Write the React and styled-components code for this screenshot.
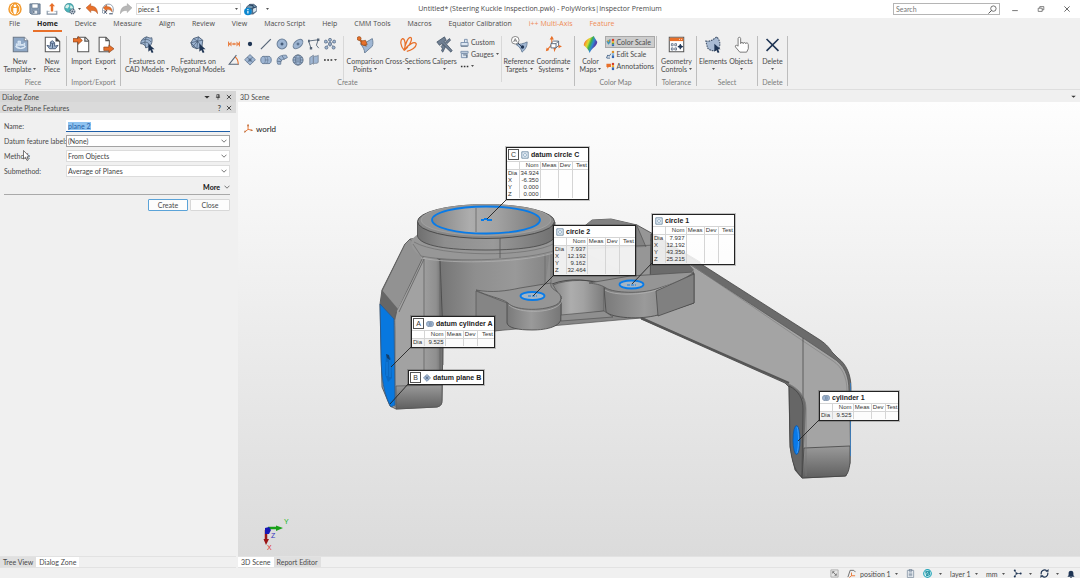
import React, { useEffect, useRef } from "react";
import styled, { createGlobalStyle } from "styled-components";

const navy = "#1f3554";
const blue = "#9fb6d3";
const orange = "#e8702a";

const GlobalStyle = createGlobalStyle`
  * {
    box-sizing: border-box;
  }

  body {
    margin: 0;
    background: #f0f0f0;
    color: #4a4a4a;
    font-family: Lato, "Open Sans", sans-serif;
    font-size: 7px;
    line-height: 8px;
  }

  button,
  input,
  select {
    margin: 0;
    padding: 0;
    border: none;
    border-radius: 0;
    background: none;
    color: inherit;
    font: inherit;
    outline: none;
  }

  select {
    appearance: none;
  }

  svg {
    display: block;
    flex: none;
  }
`;

/* ---------- icons ---------- */

const Icon = ({ size = 12, box = 20, children }) => (
  <svg width={size} height={size} viewBox={`0 0 ${box} ${box}`} fill="none" aria-hidden="true">
    {children}
  </svg>
);

const Caret = () => (
  <svg width="3" height="2" viewBox="0 0 3 2" aria-hidden="true">
    <path d="M0 0h3L1.500 2z" fill="#555" />
  </svg>
);

const Chevron = () => (
  <svg width="6" height="4" viewBox="0 0 6 4" fill="none" aria-hidden="true">
    <path d="M0.5 0.7L3 3.2L5.5 0.7" stroke="#555" strokeWidth="0.8" />
  </svg>
);

const Pointer = () => (
  <path d="M11 9l0 9.5l2.3-2l1.7 3.5l2-1l-1.7-3.4h3z" fill={navy} />
);

const icons = {
  logo: (
    <>
      <circle cx="10" cy="10" r="9.6" fill="#f39a2d" />
      <path d="M7 3C2 6 2 14 7 17M13 3c5 3 5 11 0 14" stroke="#fff" strokeWidth="1.3" />
      <circle cx="10" cy="5.500" r="2" fill="#fff" />
      <path d="M7.500 8.500h5v5l-1 4h-3l-1-4z" fill="#fff" />
    </>
  ),
  save: (
    <>
      <path d="M1.5 1.5h17v17H3.5l-2-2z" fill="#8ca0b8" stroke="#54687f" strokeWidth="1.3" />
      <path d="M5 1.5h10v7H5z" fill="#fff" stroke="#54687f" />
      <path d="M5.5 12h9v6.5h-9z" fill="#e6ebf1" stroke="#54687f" />
      <path d="M7 13v4h2v-4z" fill="#54687f" />
    </>
  ),
  publish: (
    <>
      <path d="M2 13v5.5h16V13" stroke="#8493a4" strokeWidth="1.8" />
      <path d="M3 14h3M14 14h3" stroke="#8493a4" />
      <path d="M10 0l5 5.5h-3V14H8V5.500H5z" fill={orange} />
    </>
  ),
  globe: (
    <>
      <circle cx="8.500" cy="8" r="7.5" fill="#4ab5ba" stroke="#357e8a" />
      <path d="M3 4l4-2l2 3l-3 4l-4-1zM11 3l4 4l-2 4l-3-3z" fill="#d7efe9" />
      <circle cx="14" cy="14" r="4" fill="#c8d1dc" stroke="#536577" strokeWidth="2" strokeDasharray="2 1" />
      <circle cx="14" cy="14" r="1.6" fill="#536577" />
    </>
  ),
  undo: (
    <path d="M0 8l8-7v4c7 0 11 4 11.500 13c-2.500-4-5-6-11.500-5.500V16z" fill={orange} stroke="#9e522a" strokeWidth="0.7" />
  ),
  undoHistory: (
    <>
      <path d="M1 17C-1 7 5 1 12 2s8 9 6 14" stroke="#8b99a9" strokeWidth="1.6" />
      <path d="M2 8l6-5v3c6 0 9 3 9 9c-2-3-4-4-9-4v3z" fill={orange} stroke="#8f4b2a" strokeWidth="0.6" />
      <path d="M3 12l5 6M8 12l-5 6" stroke={navy} strokeWidth="1.4" />
      <path d="M12 18h6" stroke={navy} strokeWidth="1.5" />
    </>
  ),
  redo: (
    <path d="M20 8l-8-7v4C5 5 1 9 0.500 18C3 14 5.500 12 12 12.500V16z" fill="#b8b8b8" stroke="#999" strokeWidth="0.7" />
  ),
  pieceInfo: (
    <>
      <path d="M4 6l5-4h6l4 3v8l-5 4H8l-4-3z" fill="#6d93ad" stroke={navy} />
      <path d="M8 3l6 1v4l5-2M9 9h5v7" stroke={navy} strokeWidth="1.4" />
      <path d="M14 9l5-2v5l-5 3z" fill="#dce6ec" />
      <circle cx="6" cy="13" r="5.800" fill="#0b86cf" />
      <path d="M6 12v4M6 9.300v1.400" stroke="#fff" strokeWidth="1.8" />
    </>
  ),
  template: (
    <>
      <path d="M1.5 1.5h13l4 4v13h-17z" fill="#8fa8c6" stroke="#6b7889" strokeWidth="1.2" />
      <path d="M14.500 1.500v4h4" fill="#fff" stroke="#6b7889" />
      <path d="M4 12.500c2 3 10 3 12 0l-2-1.500h-8zM7 6h3v4h3l2-2v5l-5 1.500L5 12V9l2 1z" fill="#c9dbef" stroke="#e8f1fb" strokeWidth="0.8" />
    </>
  ),
  piece: (
    <>
      <path d="M1.5 1.5h12l5 5v12h-17z" fill="#fff" stroke="#555" strokeWidth="1.2" />
      <path d="M13.500 1.500v5h5z" fill="#444" />
      <path d="M3.500 11l3 4h7l3-4l-4 1V8L10 5.500L7.500 7v5z" fill="#9fb5d0" stroke="#3d5270" />
      <path d="M8 8l2 1l2-1M10 9v5" stroke="#3d5270" />
    </>
  ),
  import: (
    <>
      <path d="M5.5 1.5h9l4 4v13h-13z" fill="#fff" stroke="#555" strokeWidth="1.2" />
      <path d="M14 1.500v4.500h4.500" stroke="#555" strokeWidth="1.5" />
      <path d="M0 3h6V0.500l5 4.700l-5 4.600V7H0z" fill={orange} stroke="#8e451c" strokeWidth="0.8" />
    </>
  ),
  export: (
    <>
      <path d="M2.500 1.500h8l4 4v13h-12z" fill="#fff" stroke="#555" strokeWidth="1.2" />
      <path d="M10.500 1.500v4h4" stroke="#555" strokeWidth="1.500" />
      <path d="M8 13h6v-2.500l6 4.500l-6 4.500V17H8z" fill={orange} stroke="#8e451c" strokeWidth="0.8" />
    </>
  ),
  cadFeatures: (
    <>
      <path d="M2 9C2 5 5 2 9 1c2 1 5 2 6 1c1 4 0 7-2 10l-5 2c0-3-3-5-6-5z" fill={blue} stroke="#52657c" strokeWidth="1.1" />
      <path d="M2 9c5-3 10-2 11 3M9 1C6 5 7 10 8 14M4 5c4-2 8-1 10 2" stroke="#52657c" />
      <Pointer />
    </>
  ),
  polyFeatures: (
    <>
      <path d="M1 8l3-5l6-2l5 4l-1 8l-6 2l-5-2z" fill={blue} stroke="#52657c" strokeWidth="1.1" />
      <path d="M1 8l8-2l6-1M4 3l5 3l1-5M9 6l-1 9M9 6l5 7M9 6l-6 7M1 8l7 7" stroke="#40536b" strokeWidth="0.8" />
      <Pointer />
    </>
  ),
  distance: <path d="M1 6v8M19 6v8M2 10h16M6 7l-4 3l4 3M14 7l4 3l-4 3M10 8v4" stroke={orange} strokeWidth="1.6" />,
  point: <circle cx="10" cy="10" r="3.600" fill={navy} />,
  line: <path d="M1.500 18.500L18 2" stroke="#566577" strokeWidth="2" />,
  circle: (
    <>
      <circle cx="10" cy="10" r="8.200" fill={blue} stroke="#6c819b" strokeWidth="1.7" />
      <path d="M10 7.500v5M7.500 10h5" stroke={navy} strokeWidth="1.500" />
    </>
  ),
  ellipse: (
    <>
      <ellipse cx="10" cy="10" rx="9.500" ry="5.800" transform="rotate(-42 10 10)" fill={blue} stroke="#6c819b" strokeWidth="1.7" />
      <path d="M10 7.500v5M7.500 10h5" stroke={navy} />
    </>
  ),
  polyline: (
    <>
      <path d="M5 17L1 5L17 3L14 12L18 17" stroke="#566577" strokeWidth="1.5" />
      <path d="M3 15h4v4H3zM0 3h3v4H0zM15 1h4v4h-4z" fill="#566577" />
    </>
  ),
  pattern: (
    <>
      <path d="M10 5v10M4 6l12 8M16 6L4 14" stroke="#7186a1" strokeWidth="1.2" />
      {[[10, 3], [3, 6], [17, 6], [10, 10], [4, 16], [16, 16]].map(([x, y]) => (
        <circle key={`${x}-${y}`} cx={x} cy={y} r="2.500" fill={blue} stroke="#52657c" strokeWidth="1.2" />
      ))}
    </>
  ),
  angle: (
    <>
      <path d="M14 2L2 17h16" stroke="#566577" strokeWidth="1.8" />
      <path d="M12 5c4 3 5 7 5 12" stroke={orange} strokeWidth="1.7" />
    </>
  ),
  plane: (
    <>
      <path d="M10 1l9 8.500l-9 9l-9-9z" fill={blue} stroke="#6c819b" strokeWidth="1.5" />
      <path d="M5.500 5l9 9M14.500 5l-9 9M10 7v6M7 10h6" stroke="#455a75" strokeWidth="1.1" />
    </>
  ),
  cylinder: (
    <>
      <path d="M5 4h10c5 0 5 12 0 12H5C0 16 0 4 5 4z" fill={blue} stroke="#6c819b" strokeWidth="1.6" />
      <path d="M6 4c4 0 4 12 0 12M10 4c4 0 4 12 0 12M8 10h6" stroke="#6c819b" strokeWidth="1.3" />
    </>
  ),
  cone: (
    <>
      <path d="M3 17C-1 8 5 1 17 2l2 4l-6 3c-4 0-6 3-5 8z" fill={blue} stroke="#6c819b" strokeWidth="1.500" />
      <path d="M4 6l6 5M10 3l4 6M2 12l7 1" stroke="#52657c" strokeWidth="1.2" />
    </>
  ),
  sphere: (
    <>
      <circle cx="10" cy="10" r="8.500" fill={blue} stroke="#52657c" strokeWidth="1.3" />
      <ellipse cx="10" cy="10" rx="4" ry="8.500" stroke="#52657c" />
      <path d="M1.500 10h17M3 5.500c4 2 10 2 14 0M3 14.500c4-2 10-2 14 0" stroke="#52657c" />
    </>
  ),
  surface: (
    <path d="M3 6l6-4v13l-6 3zM9 5c3-3 6 0 8-3v12c-3 3-5 0-8 3z" fill={blue} stroke="#7e8c9e" strokeWidth="1.500" />
  ),
  more: (
    <path d="M2 10h3.500M8.500 10H12M15 10h3.500" stroke="#333" strokeWidth="3" />
  ),
  comparison: (
    <>
      <path d="M4 9c5 0 9-3 14-6c1 4 1 6 0 9l-9 8c0-4-2-7-5-11z" fill={blue} stroke="#667b94" />
      <path d="M2 3l6 4l3 5l-5-2z" fill={orange} stroke="#884516" strokeWidth="0.700" />
      <circle cx="2.500" cy="3" r="2.300" fill={orange} stroke="#884516" strokeWidth="0.7" />
      <path d="M5 6l5-1l2 5l-4 1l-3-1z" fill={orange} stroke="#884516" strokeWidth="0.7" />
    </>
  ),
  sections: (
    <path d="M5 17C0 11 0 5 3 3c3 0 4 7 2 14C6 9 10 0 13 2c2 3-3 11-8 15c4-7 12-11 14-8c1 4-6 8-11 9" stroke={orange} strokeWidth="1.500" />
  ),
  calipers: (
    <>
      <path d="M1 7l9-6l2 4l-2.500 1.500L19 17l-1.500 2L7 9l-3 2z" fill="#6f7f92" stroke="#38485c" strokeWidth="0.8" />
      <path d="M8 10l3 3l-3 6l-1.500-1.500l1-3l-1.500-2zM11 7l5-4l1 2l-4 4z" fill="#6f7f92" stroke="#38485c" strokeWidth="0.8" />
    </>
  ),
  custom: (
    <>
      <path d="M2 10h16v8H2zM10 10V3h6v7" fill="#dce6f1" stroke="#7990ac" strokeWidth="2" />
      <path d="M2 18h15" stroke="#53667c" strokeWidth="2" />
    </>
  ),
  gauges: (
    <>
      <path d="M2 3h16v4H2zM3 8h13v9H3z" fill="#dce6f1" stroke="#7990ac" strokeWidth="2" />
      <path d="M7 11h8v6" stroke="#53667c" strokeWidth="2" />
    </>
  ),
  targets: (
    <>
      <path d="M6 10c4 0 9-1 13-3c0 4-1 8-6 12c-1-4-3-6-7-9z" fill={blue} stroke="#667b94" />
      <circle cx="5" cy="5" r="4.500" fill="#fff" stroke="#555" strokeWidth="0.800" />
      <path d="M3 7l2-4l2 4M3.700 5.700h2.600" stroke="#555" strokeWidth="0.800" />
      <path d="M8 8l5 5" stroke={navy} />
      <circle cx="13.500" cy="13" r="2" fill={navy} />
    </>
  ),
  coordinate: (
    <>
      <path d="M8 1v9l9 2M8 10l-6 7" stroke={orange} strokeWidth="1.3" />
      <path d="M8 0l2.500 4h-5zM20 12l-4 2.500v-4zM1 18l1-4.500l3 3zM11 19l-1-5h3z" fill={orange} />
      <path d="M7 9l3-3h6v5l-3 3H7zM7 9h6v5M13 9l3-3" fill="#fff" stroke="#4b5b6e" />
    </>
  ),
  elements: (
    <>
      <path d="M1 6c5 1 9-2 13-5c3 4 5 8 2 14c-4 4-11 2-13-1z" fill="#a9bbd3" stroke="#485970" strokeWidth="1.3" strokeDasharray="2 1" />
      <Pointer />
    </>
  ),
  objects: (
    <path d="M6 12V3c0-2 3-2 3 0v6c0-2 3-2 3 0c0-2 3-1.500 3 0c0-1.500 3-1 3 1v5l-2 4H8l-5-6c-1-2 1-3 3-1z" fill="#fff" stroke="#666" />
  ),
  delete: <path d="M3 3.500l14 14M17 3.500l-14 14" stroke={navy} strokeWidth="1.900" />,
  geometry: (
    <>
      <path d="M1.500 1.500h17v17h-17z" fill="#fff" stroke="#555" strokeWidth="1.2" />
      <path d="M2 2h16v4H2z" fill={orange} />
      <path d="M13 4h1M15.500 4h1" stroke="#fff" />
      <path d="M4 9h2v2.500H4zM4 14h2v2.500H4zM8 9h2v2.500H8zM8 14h2v2.500H8z" stroke="#5b6d84" />
      <path d="M14.500 9.500v6M11.500 12.500h6" stroke={navy} strokeWidth="1.300" />
      <circle cx="14.500" cy="12.500" r="1.700" stroke={navy} />
    </>
  ),
  colorMap: (
    <>
      <defs>
        <linearGradient id="rainbow" x1="0" y1="0" x2="1" y2="0.5">
          <stop offset="0.1" stopColor="#e52f2b" />
          <stop offset="0.28" stopColor="#f3a72c" />
          <stop offset="0.42" stopColor="#d8dd33" />
          <stop offset="0.56" stopColor="#3fb04b" />
          <stop offset="0.72" stopColor="#2f86d0" />
          <stop offset="0.88" stopColor="#5140a8" />
        </linearGradient>
      </defs>
      <path d="M2 11C3 4 8 3 14 0c1 3 3 5 4 7c-1 6-6 6-9 13c-1-4-4-6-7-9z" fill="url(#rainbow)" />
    </>
  ),
  colorScale: (
    <>
      <path d="M1 7c3-1 5-4 9-5v8l-5 5z" fill="#4596b8" />
      <path d="M2 6l6-2l-2 5z" fill="#e2a52d" />
      <path d="M13 2h5v5h-5z" fill="#d33f2e" />
      <path d="M13 7h5v4h-5z" fill="#f0ad2e" />
      <path d="M13 11h5v3h-5z" fill="#54a846" />
      <path d="M13 14h5v4h-5z" fill="#3467b7" />
    </>
  ),
  editScale: (
    <>
      <path d="M13 2h5v5h-5z" fill="#d9902e" />
      <path d="M13 7h5v5h-5z" fill="#8bb9dd" />
      <path d="M13 12h5v6h-5z" fill="#3467b7" />
      <path d="M1 18l3-7l3 3l4-6M2 18h7" stroke="#43638a" strokeWidth="2" />
    </>
  ),
  annotations: (
    <>
      <path d="M1 4h10v7H6l-3 4v-4H1z" fill={orange} />
      <path d="M13 2h5v5h-5z" fill="#d33f2e" />
      <path d="M13 7h5v5h-5z" fill="#f0ad2e" />
      <path d="M13 12h5v6h-5z" fill="#3467b7" />
    </>
  ),
  search: (
    <>
      <circle cx="12" cy="8" r="6" stroke="#555" strokeWidth="1.8" />
      <path d="M8 12l-7 7" stroke="#555" strokeWidth="2.200" />
    </>
  ),
  minimize: <path d="M3 14h14" stroke="#555" strokeWidth="2" />,
  restore: <path d="M3 8h10v8H3zM7 8V4h10v8h-4" stroke="#555" strokeWidth="1.800" />,
  windowClose: <path d="M3.500 3.500l13 13M16.500 3.500l-13 13" stroke="#444" strokeWidth="2" />,
  close: <path d="M3 3l14 14M17 3L3 17" stroke="#333" strokeWidth="2.800" />,
  pin: <path d="M6 2h8v9H6zM3 11h14M10 11v8M12 2v9" stroke="#333" strokeWidth="2.200" />,
  down: <path d="M1 7h18l-9 8z" fill="#333" />,
  world: (
    <>
      <path d="M9 1v11l10 2M9 12l-8 6" stroke={orange} strokeWidth="2" />
      <path d="M9 0l2.500 5h-5zM20 14l-5 2v-4zM0 19l2-5l3 4z" fill="#b97042" />
    </>
  ),
  resize: (
    <>
      <path d="M2 2h16v16H2z" fill="#e6e6e6" stroke="#aaa" strokeWidth="2" />
      <path d="M6 6l8 8M10 6H6v4M14 10v4h-4" stroke="#777" strokeWidth="2" />
    </>
  ),
  device: (
    <>
      <path d="M2 18L7 3h8l4 4" stroke="#555" strokeWidth="1.800" />
      <path d="M10 8v7h8M10 15l-5 4" stroke={orange} strokeWidth="2" />
    </>
  ),
  clipboard: (
    <>
      <path d="M3 3h14v16H3z" fill="#eef2f6" stroke="#8493a4" strokeWidth="1.800" />
      <path d="M7 1h6v4H7zM6 9h8M6 12h8M6 15h8" stroke="#66788d" strokeWidth="1.5" />
    </>
  ),
  tealGlobe: (
    <>
      <circle cx="10" cy="10" r="8.500" fill="#dff6f8" stroke="#25a6b9" strokeWidth="2.500" />
      <path d="M6 6l8-1l1 8l-7 2zM6 6l5 4l4 3M11 10l3-5M11 10l-3 5" stroke="#158b9d" strokeWidth="2" />
    </>
  ),
  nodes: (
    <>
      <path d="M4 4l4 6l-4 6M8 10h9" stroke={navy} strokeWidth="1.5" />
      <circle cx="4" cy="3.500" r="2.300" fill={navy} />
      <circle cx="8" cy="10" r="2.300" fill={navy} />
      <circle cx="4" cy="16.500" r="2.300" fill={navy} />
      <circle cx="17" cy="10" r="2.300" fill={navy} />
    </>
  ),
  refresh: (
    <>
      <path d="M3 12A7.500 7.500 0 0 1 15 4M17 8A7.500 7.500 0 0 1 5 16" stroke={navy} strokeWidth="2.600" />
      <path d="M12 6h7V0zM8 14H1v6z" fill={navy} />
    </>
  ),
  bell: <path d="M1 17l3-4V8c0-8 12-8 12 0v5l3 4zM8 18h4v2H8z" fill={navy} />,
  circleMark: (
    <>
      <path d="M2 2h16v16H2z" fill="#e9f1f8" stroke="#6d8ba3" strokeWidth="2.200" />
      <circle cx="10" cy="10" r="4" stroke="#8ca8bf" strokeWidth="1.800" />
    </>
  ),
};

/* ---------- title bar ---------- */

const TitleBar = styled.header`
  display: grid;
  grid-template-columns: 1fr auto 1fr;
  align-items: center;
  height: 18px;
  background: #fff;
`;

const QuickAccess = styled.div`
  display: flex;
  align-items: center;
  padding-left: 4px;
`;

const QuickButton = styled.button`
  display: flex;
  align-items: center;
  justify-content: center;
  gap: 2px;
  width: ${({ $w }) => $w || 16}px;
  height: 16px;
`;

const ComboBox = styled.label`
  position: relative;
  display: flex;
  align-items: center;
  width: ${({ $w }) => ($w ? `${$w}px` : "100%")};
  height: 12px;
  border: 1px solid ${({ $dark }) => ($dark ? "#a3a3a3" : "#dcdcdc")};
  background: #fff;

  select {
    width: 100%;
    height: 10px;
    padding: 0 12px 0 1px;
    color: #444;
  }

  svg {
    position: absolute;
    right: 2px;
    pointer-events: none;
  }
`;

const AppTitle = styled.h1`
  margin: 0;
  font-family: "Open Sans", sans-serif;
  font-size: 7px;
  font-weight: 400;
`;

const WindowTools = styled.div`
  display: flex;
  align-items: center;
  justify-content: flex-end;
  padding-right: 9px;
  gap: 18px;
`;

const SearchBox = styled.div`
  display: flex;
  align-items: center;
  width: 107px;
  height: 12px;
  padding: 0 2px;
  margin-right: -7px;
  border: 1px solid #b5b5b5;

  input {
    flex: 1;
    min-width: 0;
  }

  input::placeholder {
    color: #777;
  }
`;

/* ---------- ribbon ---------- */

const TabList = styled.nav`
  display: flex;
  gap: 9px;
  height: 16px;
  padding-left: 5px;
  font-family: "Open Sans", sans-serif;
`;

const RibbonTab = styled.button`
  height: 14px;
  padding: 0 4px;
  border-bottom: 2px solid ${({ $active }) => ($active ? orange : "transparent")};
  color: ${({ $active, $accent }) => ($active ? "#222" : $accent ? "#ef8c56" : "#4a4a4a")};
  font-weight: ${({ $active }) => ($active ? 700 : 400)};
  white-space: nowrap;
`;

const Ribbon = styled.div`
  display: flex;
  height: 56px;
  padding: 2px 0 3px;
  border-bottom: 1px solid #dedede;
`;

const Group = styled.section`
  display: flex;
  flex: none;
  flex-direction: column;
  justify-content: space-between;
  align-items: center;
  width: ${({ $w }) => $w}px;
  border-right: 1px solid #bdbdbd;

  h2 {
    margin: 0;
    color: #7b7b7b;
    font-size: 7px;
    font-weight: 400;
  }
`;

const GroupBody = styled.div`
  display: flex;
`;

const BigButton = styled.button`
  display: flex;
  flex-direction: column;
  align-items: center;
  width: ${({ $w }) => $w}px;
  height: 39px;
  white-space: nowrap;

  > svg {
    margin-bottom: 4px;
  }
`;

const LabelLine = styled.span`
  display: flex;
  align-items: center;
  justify-content: center;
  gap: 2px;
  height: 8px;
`;

const ToolGrid = styled.div`
  display: grid;
  grid-template-columns: repeat(7, 16px);
  grid-auto-rows: 16px;
  align-content: start;

  button {
    display: flex;
    align-items: center;
    justify-content: center;
    gap: 1px;
  }
`;

const InnerRule = styled.i`
  width: 1px;
  height: 46px;
  margin: 0 0 -7px ${({ $gap }) => $gap}px;
  background: #d8d8d8;
`;

const SmallStack = styled.div`
  display: flex;
  flex-direction: column;
  width: ${({ $w }) => $w}px;
`;

const SmallButton = styled.button`
  display: flex;
  align-items: center;
  gap: 2px;
  height: 12px;
  border: 1px solid ${({ $on }) => ($on ? "#a8a8a8" : "transparent")};
  background: ${({ $on }) => ($on ? "#cdcdcd" : "none")};
  white-space: nowrap;
`;

const Tool = ({ icon, w, lines, caret }) => (
  <BigButton $w={w}>
    <Icon size={17}>{icons[icon]}</Icon>
    <LabelLine>{lines[0]}</LabelLine>
    <LabelLine>
      {lines[1]}
      {caret && <Caret />}
    </LabelLine>
  </BigButton>
);

const ribbonTabs = [
  "File", "Home", "Device", "Measure", "Align", "Review", "View", "Macro Script",
  "Help", "CMM Tools", "Macros", "Equator Calibration", "i++ Multi-Axis", "Feature",
];

const featureTools = [
  "distance", "point", "line", "circle", "ellipse", "polyline", "pattern",
  "angle", "plane", "cylinder", "cone", "sphere", "surface", "more",
];

/* ---------- workspace ---------- */

const Page = styled.div`
  display: flex;
  flex-direction: column;
  height: 100vh;
  overflow: hidden;
`;

const Workspace = styled.main`
  display: grid;
  grid-template-columns: 236px 1fr;
  gap: 2px;
  flex: 1;
  min-height: 0;
  padding-top: 1px;
`;

const Pane = styled.section`
  display: flex;
  flex-direction: column;
  min-width: 0;
  min-height: 0;
`;

const PaneHeader = styled.div`
  display: flex;
  align-items: center;
  gap: 5px;
  flex: none;
  height: 11px;
  padding: 0 4px 0 2px;
  background: ${({ $shade }) => $shade || "#d6d6d6"};

  h2 {
    flex: 1;
    margin: 0;
    font-size: 7px;
    font-weight: 400;
  }
`;

const DialogForm = styled.form`
  flex: 1;
  padding: 7px 6px 0 4px;
`;

const Field = styled.div`
  display: grid;
  grid-template-columns: 62px 1fr;
  align-items: center;
  margin-bottom: 3px;
  white-space: nowrap;
`;

const NameInput = styled.input`
  width: 100%;
  height: 12px;
  padding: 0 2px;
  border-bottom: 1px solid #1f5fa8;
  background: #fff;

  &::selection {
    background: #8fc3f0;
    color: #1f5fa8;
  }
`;

const MoreRow = styled.div`
  display: flex;
  justify-content: flex-end;
  padding: 3px 0 3px;
  border-bottom: 1px solid #a9a9a9;
  margin-bottom: 4px;

  button {
    display: flex;
    align-items: center;
    gap: 4px;
    color: #222;
    font-weight: 900;
  }
`;

const Actions = styled.div`
  display: flex;
  justify-content: flex-end;
  gap: 2px;
`;

const ActionButton = styled.button`
  width: 40px;
  height: 12px;
  border: 1px solid ${({ $primary }) => ($primary ? "#5ba3d8" : "#d8d8d8")};
  border-radius: 1px;
  background: #fdfdfd;
`;

const BottomTabs = styled.div`
  display: flex;
  flex: none;
  height: 12px;
  border-top: 1px solid #e2e2e2;
  border-bottom: 1px solid #e2e2e2;
`;

const BottomTab = styled.button`
  padding: 0 3px;
  background: ${({ $active }) => ($active ? "#fff" : "#e0e0e0")};
  white-space: nowrap;
`;

const Canvas = styled.div`
  position: relative;
  flex: 1;
  min-height: 0;
  overflow: hidden;
  background: linear-gradient(#fefefe, #ececec 50%, #dbdbdb);
`;

const WorldTag = styled.div`
  position: absolute;
  left: 6px;
  top: 22px;
  display: flex;
  align-items: center;
  gap: 3px;
  color: #222;
  font-size: 8px;
`;

const MousePointer = styled.svg`
  position: absolute;
  left: 23px;
  top: 150px;
`;

/* ---------- feature annotations ---------- */

const Annotation = styled.article`
  position: absolute;
  left: ${({ $x }) => $x}px;
  top: ${({ $y }) => $y}px;
  width: ${({ $w }) => $w}px;
  padding-bottom: ${({ $bare }) => ($bare ? 0 : 1)}px;
  border: 1px solid #222;
  outline: 1px solid rgba(40, 40, 40, 0.25);
  background: rgba(255, 255, 255, 0.86);
  color: #333;
  font-family: "Liberation Sans", Arial, sans-serif;
  font-size: 6px;
  line-height: 7px;

  header {
    display: flex;
    align-items: center;
    gap: 2px;
    height: ${({ $datum }) => ($datum ? 13 : 11)}px;
    padding: 0 2px;
    background: #fff;
  }

  h3 {
    margin: 0;
    font-size: 7px;
    color: #222;
    white-space: nowrap;
  }

  table {
    width: 100%;
    border-collapse: collapse;
    table-layout: fixed;
  }

  th,
  td {
    padding: 0 1px;
    border-left: 1px solid #d5d5d5;
    font-weight: 400;
    text-align: right;
  }

  thead th {
    height: 8px;
    border-top: 1px solid #d5d5d5;
    border-bottom: 1px solid #d5d5d5;
    background: #fff;
  }

  th:first-child {
    border-left: none;
    text-align: left;
  }
`;

const DatumLetter = styled.b`
  flex: none;
  width: 11px;
  height: 11px;
  margin-left: -1px;
  border: 1px solid #555;
  font-size: 7px;
  font-weight: 400;
  line-height: 9px;
  text-align: center;
`;

const features = [
  { name: "datum circle C", datum: "C", mark: "circleMark", x: 268, y: 45, w: 83, rows: [["Dia", "34.924"], ["X", "-6.350"], ["Y", "0.000"], ["Z", "0.000"]] },
  { name: "circle 2", mark: "circleMark", x: 315, y: 123, w: 83, rows: [["Dia", "7.937"], ["X", "12.192"], ["Y", "9.162"], ["Z", "32.464"]] },
  { name: "circle 1", mark: "circleMark", x: 414, y: 112, w: 83, rows: [["Dia", "7.937"], ["X", "12.192"], ["Y", "43.350"], ["Z", "25.215"]] },
  { name: "datum cylinder A", datum: "A", mark: "cylinder", x: 173, y: 214, w: 84, rows: [["Dia", "9.525"]] },
  { name: "datum plane B", datum: "B", mark: "plane", x: 170, y: 268, w: 76, rows: [] },
  { name: "cylinder 1", mark: "cylinder", x: 581, y: 289, w: 80, rows: [["Dia", "9.525"]] },
];

const FeatureNote = ({ name, datum, mark, x, y, w, rows }) => (
  <Annotation $x={x} $y={y} $w={w} $datum={datum} $bare={!rows.length}>
    <header>
      {datum && <DatumLetter>{datum}</DatumLetter>}
      <Icon size={8}>{icons[mark]}</Icon>
      <h3>{name}</h3>
    </header>
    {rows.length > 0 && (
      <table>
        <colgroup>
          <col width="12" />
          <col width="21" />
          <col width="18" />
          <col width="14" />
          <col />
        </colgroup>
        <thead>
          <tr>
            <th aria-label="Dimension" />
            <th>Nom</th>
            <th>Meas</th>
            <th>Dev</th>
            <th>Test</th>
          </tr>
        </thead>
        <tbody>
          {rows.map(([label, nominal]) => (
            <tr key={label}>
              <th scope="row">{label}</th>
              <td>{nominal}</td>
              <td />
              <td />
              <td />
            </tr>
          ))}
        </tbody>
      </table>
    )}
  </Annotation>
);

/* The part is drawn in its own coordinates, with the view starting at 238, 102. */
const KnuckleModel = () => (
  <svg width="842" height="456" viewBox="238 102 842 456" fill="none" aria-hidden="true">
    <defs>
      <linearGradient id="ringWall" x1="0" x2="1">
        <stop offset="0" stopColor="#6f6f6f" />
        <stop offset="0.2" stopColor="#8e8e8e" />
        <stop offset="0.55" stopColor="#9a9a9a" />
        <stop offset="1" stopColor="#707070" />
      </linearGradient>
      <linearGradient id="bore" x1="0" x2="1">
        <stop offset="0" stopColor="#858585" />
        <stop offset="0.35" stopColor="#adadad" />
        <stop offset="0.6" stopColor="#a2a2a2" />
        <stop offset="1" stopColor="#7c7c7c" />
      </linearGradient>
      <linearGradient id="body" gradientUnits="userSpaceOnUse" x1="440" y1="0" x2="556" y2="0">
        <stop offset="0" stopColor="#757575" />
        <stop offset="0.3" stopColor="#8e8e8e" />
        <stop offset="0.65" stopColor="#999" />
        <stop offset="1" stopColor="#808080" />
      </linearGradient>
      <linearGradient id="lug" x1="0" x2="1">
        <stop offset="0" stopColor="#7a7a7a" />
        <stop offset="0.45" stopColor="#9a9a9a" />
        <stop offset="1" stopColor="#777" />
      </linearGradient>
      <linearGradient id="foot" x1="0" y1="0" x2="0" y2="1">
        <stop offset="0" stopColor="#9a9a9a" />
        <stop offset="1" stopColor="#5f5f5f" />
      </linearGradient>
      <linearGradient id="post" gradientUnits="userSpaceOnUse" x1="420" y1="0" x2="443" y2="0">
        <stop offset="0" stopColor="#a3a3a3" />
        <stop offset="0.7" stopColor="#8f8f8f" />
        <stop offset="1" stopColor="#6c6c6c" />
      </linearGradient>
    </defs>

    {/* rear hump and deck */}
    <path d="M545 250L586 225L592 220L611 219L637 225L655 235L700 262L690 300H545z" fill="#969696" stroke="#444" strokeWidth="0.8" />
    <path d="M586 225L592 220L611 219L637 225L646 247L553 251z" fill="#828282" />
    <path d="M553 250L655 245M637 226L646 247" stroke="#555" strokeWidth="0.7" />

    {/* right arm */}
    <path d="M651 234L687 255L817 338C825 343 829 347 832 352L838 358C846 364 851 374 851 388L850 463L846 476L802 478L795 470L790 447L789 387L785 383L641 319L650 290z" fill="#6b6b6b" stroke="#444" strokeWidth="0.8" />
    <path d="M640 316L694 270L687 262L803 338L833 358C843 364 849 374 849 391L850 448L804 449L806 408C806 396 798 389 789 384z" fill="#a4a4a4" />
    <path d="M650 240L691 265L803 338L833 358C844 365 849 375 849 391" stroke="#595959" strokeWidth="0.8" />
    <path d="M687 262L803 341L833 361C842 367 847 377 847 391" stroke="#7d7d7d" strokeWidth="0.6" />
    <path d="M641 318L789 383" stroke="#555" strokeWidth="2" />
    <path d="M803 338V399" stroke="#4b4b4b" strokeWidth="0.8" />
    <path d="M789 386C799 391 803 399 803 409L802 477C794 472 790 455 790 440z" fill="#666" stroke="#444" strokeWidth="0.8" />
    <path d="M804 448L850 446V463C849 470 848 474 845 476L802 478z" fill="url(#foot)" stroke="#444" strokeWidth="0.8" />
    <path d="M789 384C801 390 806 398 806 409V476" stroke="#777" strokeWidth="0.8" />
    <path d="M850.500 383V391M850.500 419V456" stroke="#347dc5" strokeWidth="0.8" />
    <ellipse cx="796.5" cy="440" rx="3.5" ry="14.500" fill="#0879e8" stroke="#1357a0" strokeWidth="0.8" />
    <path d="M797 427c2 5 2 20 0 26" stroke="#4aa6ff" strokeWidth="0.8" />

    {/* centre body */}
    <path d="M420 240H556V320L494 331H440L430 325z" fill="url(#body)" stroke="#555" strokeWidth="0.8" />
    <path d="M550 251L572 246L640 280L694 272L640 316L540 323z" fill="#8f8f8f" />
    <path d="M490 325L640 309L641 318L494 331z" fill="#868686" stroke="#555" strokeWidth="0.7" />
    <path d="M545 254V286M551 250V284" stroke="#666" strokeWidth="0.7" />

    {/* left arm */}
    <path d="M418 238L410 239L405 244L382 290L380 304L381 350L382 387L390 406L396 409L437 407C441 406 442 404 442 400L443 335L440 260L433 255L421 256z" fill="url(#post)" stroke="#444" strokeWidth="0.8" />
    <path d="M405 244L410 239L424 255L397 312L382 291z" fill="#929292" stroke="#555" strokeWidth="0.7" />
    <path d="M382 290L398 309L395 320L380 305z" fill="#666" />
    <path d="M397 311L425 257V386L396 390z" fill="#a2a2a2" />
    <path d="M396 312C394 317 395 322 395 333V407M399 312L424 259M424 259V386M440 258V374M443 335V365" stroke="#606060" strokeWidth="0.8" />
    <path d="M396 386L442 385V400C442 404 441 406 437 407L396 409z" fill="url(#foot)" stroke="#555" strokeWidth="0.7" />
    <path d="M380 304L394 319L395 405L391 407C384 395 381 378 381 350z" fill="#0878df" stroke="#28588b" strokeWidth="0.8" />
    <path d="M386 354L391 358L392 378L388 382L385 374z" fill="#0a68c2" />
    <path d="M386 354l3 1l1 5l-3-2z" fill="#123f6c" />
    <path d="M390 360v17M387 362v14" stroke="#1b90f5" strokeWidth="0.7" />

    {/* neck flare */}
    <path d="M418 234H555L556 251C540 260 460 263 421 256C415 253 409 246 412 239z" fill="#979797" />
    <path d="M421 256C455 263 530 260 556 250M414 242C440 257 530 258 555 243M421 256l-8-12" stroke="#6f6f6f" strokeWidth="0.7" />
    <path d="M421 258C455 265 530 262 556 252" stroke="#b0b0b0" strokeWidth="0.8" />

    {/* ring */}
    <path d="M417.5 222V236C420 246 448 250 486 250C524 250 552 246 555 236V222z" fill="url(#ringWall)" stroke="#444" strokeWidth="0.8" />
    <ellipse cx="486" cy="221.500" rx="68.500" ry="17" fill="#898989" stroke="#444" strokeWidth="0.9" />
    <ellipse cx="486" cy="220" rx="65" ry="15.500" fill="#949494" stroke="#a6a6a6" strokeWidth="0.7" />
    <ellipse cx="486" cy="220" rx="54" ry="13.500" fill="url(#bore)" stroke="#087be8" strokeWidth="1.800" />
    <path d="M476 208V232" stroke="#666" strokeWidth="0.8" />
    <path d="M500 238V258" stroke="#555" strokeWidth="0.8" />
    <path d="M481 220h3M484 219h4M487 220h5" stroke="#087be8" strokeWidth="1.800" />

    {/* lugs */}
    <path d="M476 291L507 303V326L494 331H476z" fill="#858585" />
    <path d="M476 331V291L507 303" stroke="#555" strokeWidth="0.7" />
    <path d="M604 288L694 273V303L658 315C640 320 612 318 606 312z" fill="url(#lug)" stroke="#444" strokeWidth="0.8" />
    <path d="M553 285C567 279 593 279 604 284V311L561 317V298z" fill="url(#bore)" stroke="#555" strokeWidth="0.7" />
    <path d="M507 301V323C508 328 518 330 532 330C548 330 561 326 561 318V296z" fill="url(#lug)" stroke="#444" strokeWidth="0.8" />
    <path d="M476 290C492 293 506 291 520 288L551 283C550 287 553 289 556 291C563 295 562 302 556 305C540 312 514 310 508 303C502 298 486 296 476 290z" fill="#959595" stroke="#555" strokeWidth="0.8" />
    <path d="M509 305C516 312 543 314 556 307C560 305 562 302 562 299" stroke="#b2b2b2" strokeWidth="0.8" />
    <path d="M552 284C570 277 592 280 604 285" stroke="#444" strokeWidth="0.9" />
    <path d="M589 283L630 276L694 272C686 279 672 284 656 289C641 294 614 293 606 288C600 284 595 284 589 283z" fill="#959595" stroke="#555" strokeWidth="0.8" />
    <path d="M605 290C614 296 642 295 657 290L693 275" stroke="#b2b2b2" strokeWidth="0.8" />
    <path d="M656 291L694 274V303L658 316z" fill="#808080" stroke="#444" strokeWidth="0.7" />
    <path d="M561 315L604 311L613 317L561 321z" fill="#8f8f8f" stroke="#555" strokeWidth="0.7" />
    <ellipse cx="532.5" cy="296" rx="12" ry="4" fill="#a5b5c4" stroke="#087be8" strokeWidth="1.800" />
    <ellipse cx="631.5" cy="284.500" rx="12" ry="4" fill="#a5b5c4" stroke="#087be8" strokeWidth="1.800" />
    <path d="M528 296h9M627 285h9" stroke="#087be8" strokeWidth="1.200" strokeDasharray="3 1" />

    {/* leader lines */}
    <path d="M507 199L487 219M554 275L533 296M652 263L632 284M412 346L391 367M409 383L390 404M820 419L798 441" stroke="#222" strokeWidth="0.9" />

    {/* axis triad */}
    <path d="M266 530V541" stroke="#9a1515" strokeWidth="2.500" />
    <path d="M263.500 539h5.500L266 545z" fill="#9a1515" />
    <path d="M268 528H277" stroke="#18a018" strokeWidth="2.500" />
    <path d="M276 525.500L283 528L276 531z" fill="#18a018" />
    <path d="M265 528l4-1l2 3l-2 4h-4z" fill="#1717b5" />
    <text x="284" y="524" fill="#20b820" fontFamily="Liberation Sans, sans-serif" fontSize="7">Y</text>
    <text x="271" y="538" fill="#3434bd" fontFamily="Liberation Sans, sans-serif" fontSize="7">Z</text>
    <text x="267" y="550" fill="#e12a2a" fontFamily="Liberation Sans, sans-serif" fontSize="7">X</text>
  </svg>
);

/* ---------- status bar ---------- */

const StatusBar = styled.footer`
  display: flex;
  flex: none;
  align-items: center;
  justify-content: flex-end;
  height: 10px;
  padding: 1px 5px 0 0;
  gap: 8px;

  button {
    display: flex;
    align-items: center;
    gap: 7px;
  }
`;

const StatusSelect = styled.label`
  display: flex;
  align-items: center;
  gap: 4px;
`;

const App = () => {
  const nameRef = useRef(null);

  useEffect(() => {
    nameRef.current.focus();
    nameRef.current.select();
  }, []);

  return (
    <Page>
      <GlobalStyle />

      <TitleBar>
        <QuickAccess>
          <QuickButton $w={22} aria-label="PolyWorks"><Icon size={14}>{icons.logo}</Icon></QuickButton>
          <QuickButton $w={18} aria-label="Save"><Icon>{icons.save}</Icon></QuickButton>
          <QuickButton aria-label="Publish"><Icon>{icons.publish}</Icon></QuickButton>
          <QuickButton $w={24} aria-label="Connection"><Icon>{icons.globe}</Icon><Caret /></QuickButton>
          <QuickButton aria-label="Undo"><Icon>{icons.undo}</Icon></QuickButton>
          <QuickButton aria-label="Undo history"><Icon>{icons.undoHistory}</Icon></QuickButton>
          <QuickButton $w={20} aria-label="Redo"><Icon>{icons.redo}</Icon></QuickButton>
          <ComboBox $w={105}>
            <select aria-label="Piece"><option>piece 1</option></select>
            <Caret />
          </ComboBox>
          <QuickButton $w={18} aria-label="Piece info"><Icon size={13}>{icons.pieceInfo}</Icon></QuickButton>
          <QuickButton aria-label="Customize toolbar"><Caret /></QuickButton>
        </QuickAccess>
        <AppTitle>Untitled* (Steering Kuckle Inspection.pwk) - PolyWorks|Inspector Premium</AppTitle>
        <WindowTools>
          <SearchBox>
            <input placeholder="Search" aria-label="Search" />
            <Icon size={9}>{icons.search}</Icon>
          </SearchBox>
          <button aria-label="Minimize"><Icon size={8}>{icons.minimize}</Icon></button>
          <button aria-label="Restore"><Icon size={8}>{icons.restore}</Icon></button>
          <button aria-label="Close window"><Icon size={8}>{icons.windowClose}</Icon></button>
        </WindowTools>
      </TitleBar>

      <TabList>
        {ribbonTabs.map((tab, i) => (
          <RibbonTab key={tab} $active={tab === "Home"} $accent={i > 11}>{tab}</RibbonTab>
        ))}
      </TabList>

      <Ribbon>
        <Group $w={67}>
          <GroupBody>
            <Tool icon="template" w={38} lines={["New", "Template"]} caret />
            <Tool icon="piece" w={26} lines={["New", "Piece"]} />
          </GroupBody>
          <h2>Piece</h2>
        </Group>
        <Group $w={54}>
          <GroupBody>
            <Tool icon="import" w={24} lines={["Import"]} caret />
            <Tool icon="export" w={24} lines={["Export"]} caret />
          </GroupBody>
          <h2>Import/Export</h2>
        </Group>
        <Group $w={454}>
          <GroupBody>
            <Tool icon="cadFeatures" w={46} lines={["Features on", "CAD Models"]} caret />
            <Tool icon="polyFeatures" w={56} lines={["Features on", "Polygonal Models"]} />
            <ToolGrid>
              {featureTools.map((name) => (
                <button key={name} aria-label={name}>
                  <Icon size={name === "more" ? 10 : 12}>{icons[name]}</Icon>
                  {name === "more" && <Caret />}
                </button>
              ))}
            </ToolGrid>
            <InnerRule $gap={5} />
            <Tool icon="comparison" w={42} lines={["Comparison", "Points"]} caret />
            <Tool icon="sections" w={44} lines={["Cross-Sections"]} caret />
            <Tool icon="calipers" w={29} lines={["Calipers"]} caret />
            <SmallStack $w={39}>
              <SmallButton><Icon size={9}>{icons.custom}</Icon>Custom</SmallButton>
              <SmallButton><Icon size={9}>{icons.gauges}</Icon>Gauges<Caret /></SmallButton>
              <SmallButton aria-label="More gauges"><Icon size={9}>{icons.more}</Icon><Caret /></SmallButton>
            </SmallStack>
            <InnerRule $gap={3} />
            <Tool icon="targets" w={34} lines={["Reference", "Targets"]} caret />
            <Tool icon="coordinate" w={35} lines={["Coordinate", "Systems"]} caret />
          </GroupBody>
          <h2>Create</h2>
        </Group>
        <Group $w={82}>
          <GroupBody>
            <Tool icon="colorMap" w={28} lines={["Color", "Maps"]} caret />
            <SmallStack $w={50}>
              <SmallButton $on><Icon size={9}>{icons.colorScale}</Icon>Color Scale</SmallButton>
              <SmallButton><Icon size={9}>{icons.editScale}</Icon>Edit Scale</SmallButton>
              <SmallButton><Icon size={9}>{icons.annotations}</Icon>Annotations</SmallButton>
            </SmallStack>
          </GroupBody>
          <h2>Color Map</h2>
        </Group>
        <Group $w={40}>
          <GroupBody>
            <Tool icon="geometry" w={34} lines={["Geometry", "Controls"]} caret />
          </GroupBody>
          <h2>Tolerance</h2>
        </Group>
        <Group $w={61}>
          <GroupBody>
            <Tool icon="elements" w={28} lines={["Elements"]} caret />
            <Tool icon="objects" w={28} lines={["Objects"]} caret />
          </GroupBody>
          <h2>Select</h2>
        </Group>
        <Group $w={30}>
          <GroupBody>
            <Tool icon="delete" w={28} lines={["Delete"]} caret />
          </GroupBody>
          <h2>Delete</h2>
        </Group>
      </Ribbon>

      <Workspace>
        <Pane>
          <PaneHeader>
            <h2>Dialog Zone</h2>
            <button aria-label="Zone menu"><Icon size={6}>{icons.down}</Icon></button>
            <button aria-label="Pin"><Icon size={6}>{icons.pin}</Icon></button>
            <button aria-label="Close zone"><Icon size={6}>{icons.close}</Icon></button>
          </PaneHeader>
          <PaneHeader $shade="#dadada">
            <h2>Create Plane Features</h2>
            <button aria-label="Help"><b>?</b></button>
            <button aria-label="Close dialog"><Icon size={6}>{icons.close}</Icon></button>
          </PaneHeader>
          <DialogForm onSubmit={(e) => e.preventDefault()}>
            <Field>
              <label htmlFor="name">Name:</label>
              <NameInput id="name" ref={nameRef} defaultValue="plane 2" />
            </Field>
            <Field>
              <label htmlFor="datum">Datum feature label:</label>
              <ComboBox as="div" $dark>
                <select id="datum"><option>(None)</option></select>
                <Chevron />
              </ComboBox>
            </Field>
            <Field>
              <label htmlFor="method">Method:</label>
              <ComboBox as="div">
                <select id="method"><option>From Objects</option></select>
                <Chevron />
              </ComboBox>
            </Field>
            <Field>
              <label htmlFor="submethod">Submethod:</label>
              <ComboBox as="div">
                <select id="submethod"><option>Average of Planes</option></select>
                <Chevron />
              </ComboBox>
            </Field>
            <MoreRow>
              <button type="button">More<Chevron /></button>
            </MoreRow>
            <Actions>
              <ActionButton $primary>Create</ActionButton>
              <ActionButton type="button">Close</ActionButton>
            </Actions>
          </DialogForm>
          <BottomTabs>
            <BottomTab>Tree View</BottomTab>
            <BottomTab $active>Dialog Zone</BottomTab>
          </BottomTabs>
        </Pane>

        <Pane>
          <PaneHeader $shade="#f0f0f0">
            <h2>3D Scene</h2>
            <button aria-label="Scene menu"><Icon size={5}>{icons.down}</Icon></button>
          </PaneHeader>
          <Canvas>
            <KnuckleModel />
            <WorldTag><Icon size={9}>{icons.world}</Icon>world</WorldTag>
            {features.map((feature) => (
              <FeatureNote key={feature.name} {...feature} />
            ))}
          </Canvas>
          <BottomTabs>
            <BottomTab $active>3D Scene</BottomTab>
            <BottomTab>Report Editor</BottomTab>
          </BottomTabs>
        </Pane>
      </Workspace>

      <StatusBar>
        <button aria-label="Fit window"><Icon size={9}>{icons.resize}</Icon></button>
        <StatusSelect>
          <Icon size={9}>{icons.device}</Icon>
          <select aria-label="Device position"><option>position 1</option></select>
          <Caret />
        </StatusSelect>
        <button aria-label="Clipboard"><Icon size={9}>{icons.clipboard}</Icon></button>
        <button aria-label="Alignment"><Icon size={9}>{icons.tealGlobe}</Icon><Caret /></button>
        <StatusSelect>
          <select aria-label="Layer"><option>layer 1</option></select>
          <Caret />
        </StatusSelect>
        <StatusSelect>
          <select aria-label="Units"><option>mm</option></select>
          <Caret />
        </StatusSelect>
        <button aria-label="Point connection"><Icon size={9}>{icons.nodes}</Icon><Caret /></button>
        <button aria-label="Refresh"><Icon size={9}>{icons.refresh}</Icon><Caret /></button>
        <button aria-label="Notifications"><Icon size={8}>{icons.bell}</Icon></button>
      </StatusBar>

      <MousePointer width="7" height="11" viewBox="0 0 7 11" aria-hidden="true">
        <path d="M0.500 0.500V9L2.500 7.200L4 10.500L5.300 9.900L4 6.800H6.500z" fill="#fff" stroke="#444" strokeWidth="0.700" />
      </MousePointer>
    </Page>
  );
};

export default App;
